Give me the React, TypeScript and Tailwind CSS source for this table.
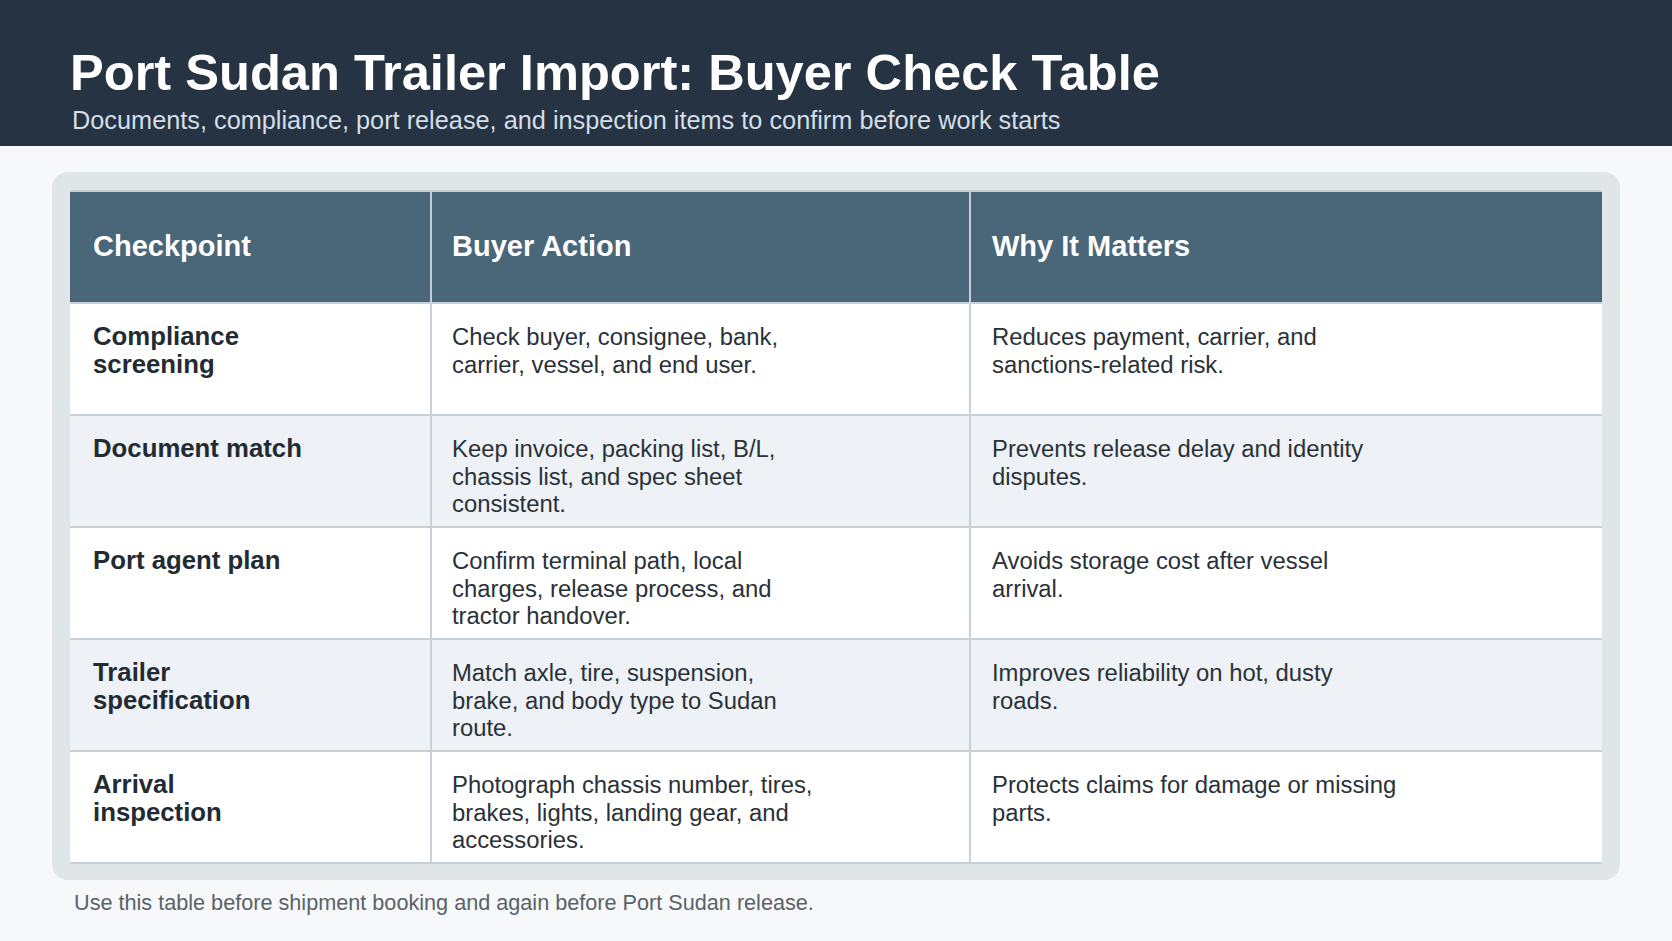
const rows = [
  {
    checkpoint: "Compliance screening",
    action: "Check buyer, consignee, bank, carrier, vessel, and end user.",
    why: "Reduces payment, carrier, and sanctions-related risk.",
  },
  {
    checkpoint: "Document match",
    action: "Keep invoice, packing list, B/L, chassis list, and spec sheet consistent.",
    why: "Prevents release delay and identity disputes.",
  },
  {
    checkpoint: "Port agent plan",
    action: "Confirm terminal path, local charges, release process, and tractor handover.",
    why: "Avoids storage cost after vessel arrival.",
  },
  {
    checkpoint: "Trailer specification",
    action: "Match axle, tire, suspension, brake, and body type to Sudan route.",
    why: "Improves reliability on hot, dusty roads.",
  },
  {
    checkpoint: "Arrival inspection",
    action: "Photograph chassis number, tires, brakes, lights, landing gear, and accessories.",
    why: "Protects claims for damage or missing parts.",
  },
];

const font = "font-['Liberation_Sans',Arial,sans-serif]";

export default function App() {
  return (
    <div className={`min-h-[941px] w-full bg-[#f6f8f9] ${font}`}>
      <header className="h-[146px] bg-[#253342] pl-[70px] pt-[48px]">
        <h1 className="text-[50.6px] font-bold leading-[50px] text-white">
          Port Sudan Trailer Import: Buyer Check Table
        </h1>
        <p className="mt-[7px] pl-[2px] text-[25.3px] leading-[30px] text-[#d3dee8]">
          Documents, compliance, port release, and inspection items to confirm before work starts
        </p>
      </header>

      <main className="px-[52px] pt-[26px]">
        <section className="rounded-[16px] bg-[#e0e5e8] px-[18px] pt-[18px] pb-[16px]">
          <div className="border-y-2 border-[#c6cfd6]">
            <div className="grid h-[110px] grid-cols-[360px_539px_1fr] bg-[#4a6679] text-[29px] font-bold text-white">
              <div className="flex items-center pl-[23px]">Checkpoint</div>
              <div className="flex items-center border-l-2 border-[#c6cfd6] pl-[20px]">Buyer Action</div>
              <div className="flex items-center border-l-2 border-[#c6cfd6] pl-[21px]">Why It Matters</div>
            </div>
            {rows.map((row, i) => (
              <div
                key={row.checkpoint}
                className={`grid h-[112px] grid-cols-[360px_539px_1fr] border-t-2 border-[#c9d1d8] ${
                  i % 2 === 1 ? "bg-[#eef2f6]" : "bg-white"
                }`}
              >
                <div className="pl-[23px] pt-[19px]">
                  <div className="max-w-[8.28em] text-[25.75px] font-bold leading-[27.5px] text-[#232b32]">
                    {row.checkpoint}
                  </div>
                </div>
                <div className="border-l-2 border-[#c9d1d8] pl-[20px] pt-[19px]">
                  <div className="max-w-[15.45em] text-[23.85px] leading-[27.5px] text-[#2a3137]">
                    {row.action}
                  </div>
                </div>
                <div className="border-l-2 border-[#c9d1d8] pl-[21px] pt-[19px]">
                  <div className="max-w-[17.15em] text-[23.85px] leading-[27.5px] text-[#2a3137]">
                    {row.why}
                  </div>
                </div>
              </div>
            ))}
          </div>
        </section>
        <p className="mt-[10px] pl-[22px] text-[21.65px] leading-[26px] text-[#5a6269]">
          Use this table before shipment booking and again before Port Sudan release.
        </p>
      </main>
    </div>
  );
}
